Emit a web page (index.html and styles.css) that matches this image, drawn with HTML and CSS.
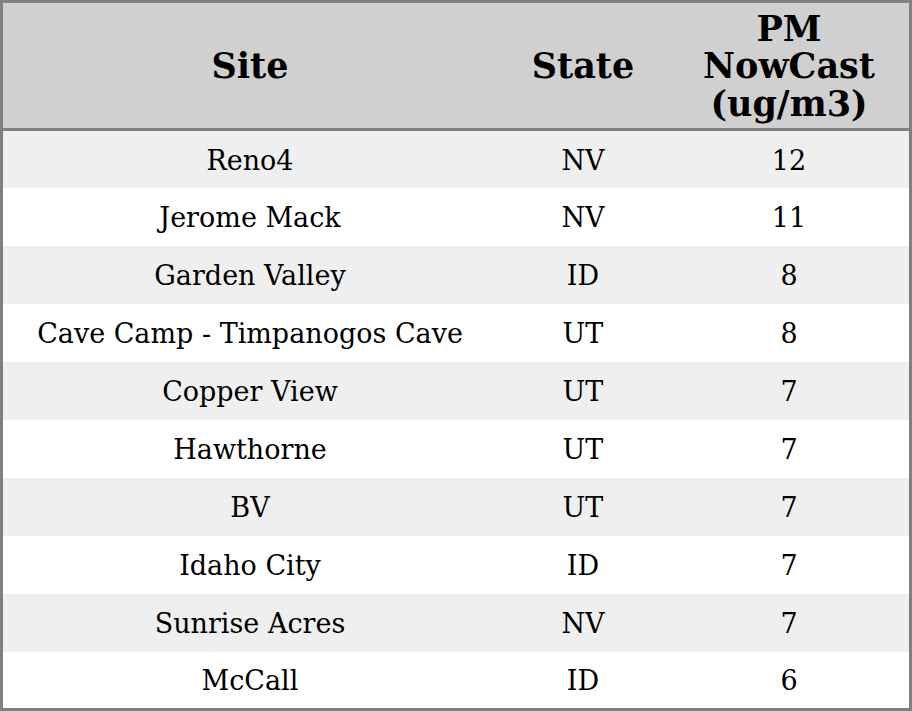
FILE: index.html
```html
<!DOCTYPE html>
<html>
<head>
<meta charset="utf-8">
<link rel="stylesheet" href="styles.css">
</head>
<body>
<table class="tbl">
  <thead>
    <tr class="head">
      <th class="c-site">Site</th>
      <th class="c-state">State</th>
      <th class="c-pm">PM<br>NowCast<br>(ug/m3)</th>
    </tr>
  </thead>
  <tbody>
    <tr><td>Reno4</td><td>NV</td><td>12</td></tr>
    <tr><td>Jerome Mack</td><td>NV</td><td>11</td></tr>
    <tr><td>Garden Valley</td><td>ID</td><td>8</td></tr>
    <tr><td>Cave Camp - Timpanogos Cave</td><td>UT</td><td>8</td></tr>
    <tr><td>Copper View</td><td>UT</td><td>7</td></tr>
    <tr><td>Hawthorne</td><td>UT</td><td>7</td></tr>
    <tr><td>BV</td><td>UT</td><td>7</td></tr>
    <tr><td>Idaho City</td><td>ID</td><td>7</td></tr>
    <tr><td>Sunrise Acres</td><td>NV</td><td>7</td></tr>
    <tr><td>McCall</td><td>ID</td><td>6</td></tr>
  </tbody>
</table>
</body>
</html>
```
FILE: styles.css
```css
html, body {
  margin: 0;
  padding: 0;
  background: #ffffff;
}
.tbl {
  width: 912px;
  height: 711px;
  border-collapse: collapse;
  border: 3px solid #808080;
  font-family: "DejaVu Serif", serif;
  color: #000;
  table-layout: fixed;
}
.head {
  background: #d0d0d0;
  height: 128px;
}
.head th {
  font-size: 35px;
  font-weight: bold;
  line-height: 37.5px;
  text-align: center;
  vertical-align: middle;
  padding: 1px 0 0 0;
  border-bottom: 3px solid #808080;
}
.c-site { width: 494px; }
.c-state { width: 172px; }
.c-pm { width: 240px; }
tbody tr { height: 57.7px; }
tbody tr:nth-child(odd) { background: #efefef; }
tbody td {
  font-size: 27px;
  text-align: center;
  vertical-align: middle;
  padding: 2px 0 0 0;
}
```
